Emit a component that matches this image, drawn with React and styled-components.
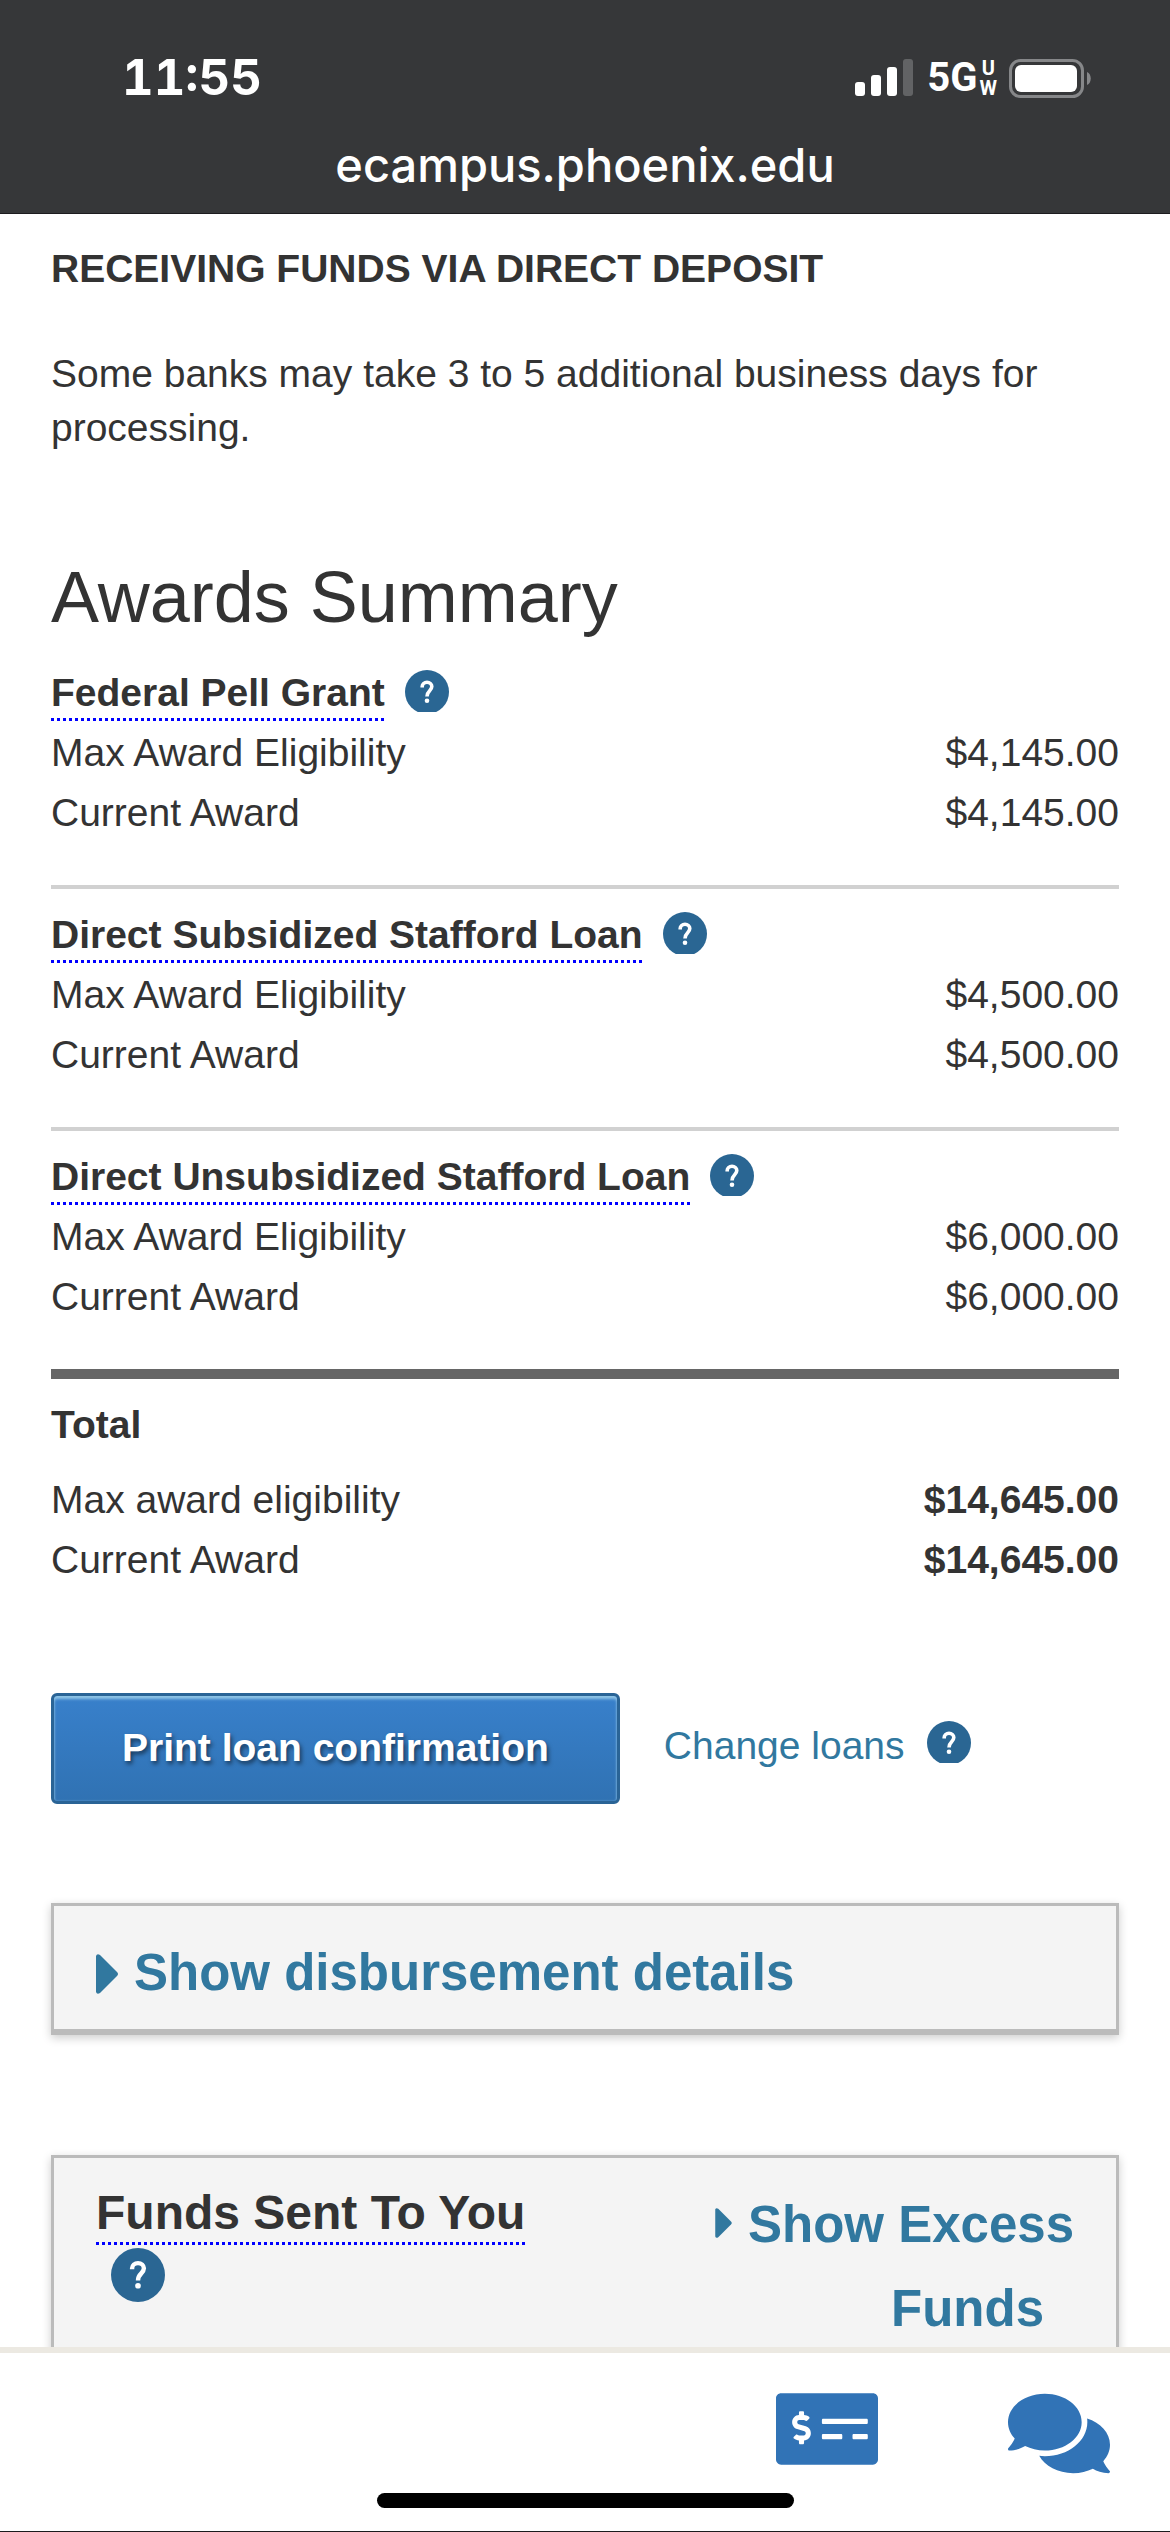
// App.jsx
import styled, { createGlobalStyle } from 'styled-components';
import { FaComments, FaMoneyCheckAlt } from 'react-icons/fa';

const GlobalStyle = createGlobalStyle`
  * {
    box-sizing: border-box;
  }

  body {
    margin: 0;
    background-color: #fff;
    color: #333;
    font-family: "Liberation Sans", Arial, sans-serif;
    font-size: 39px;
    line-height: 54px;
  }
`;

const Screen = styled.div`
  display: flex;
  flex-direction: column;
  height: 100vh;
`;

const BrowserHeader = styled.header`
  flex: none;
  background-color: #363739;
  border-bottom: 1px solid #1c1c1e;
  color: #fff;
  font-family: Inter, sans-serif;
`;

const StatusBar = styled.div`
  display: flex;
  align-items: center;
  justify-content: space-between;
  padding: 48px 79px 0 122px;
`;

const Time = styled.time`
  font-size: 49px;
  font-variant-numeric: tabular-nums;
  font-weight: 700;
  line-height: 60px;
`;

const StatusIcons = styled.div`
  display: flex;
  align-items: center;

  svg {
    display: block;
  }
`;

const Network = styled.span`
  display: flex;
  align-items: center;
  gap: 2px;
  margin: 0 12px 0 14px;
  font-family: Roboto, sans-serif;
  font-size: 40px;
  font-weight: 700;
  line-height: 40px;
`;

const NetworkBand = styled.span`
  display: flex;
  flex-direction: column;
  align-items: center;
  font-size: 20px;
  line-height: 20px;
`;

const Address = styled.div`
  padding: 27px 51px 19px;
  font-size: 47px;
  font-weight: 500;
  line-height: 59px;
  text-align: center;
`;

const Content = styled.main`
  flex: 1;
  min-height: 0;
  overflow-y: auto;
  padding: 28px 51px 0;
  scrollbar-width: none;
`;

const NoticeTitle = styled.h4`
  margin: 0 0 51px;
  font-size: 39px;
`;

const Notice = styled.p`
  margin: 0 0 102px;
`;

const SectionTitle = styled.h2`
  margin: 0 0 10px;
  font-size: 72px;
  font-weight: 400;
  line-height: 80px;
`;

const Award = styled.section`
  padding: 16px 0 42px;
  border-bottom: ${props => (props.$last ? '10px solid #666' : '4px solid #d1d1d1')};
`;

const AwardTitle = styled.h3`
  display: flex;
  align-items: flex-start;
  gap: 20px;
  height: 60px;
  margin: 0;
  font-size: 39px;
  line-height: 60px;

  button {
    margin-top: 7px;
  }
`;

const Term = styled.span`
  height: ${props => (props.$large ? 62 : 58)}px;
  font-size: ${props => (props.$large ? 48 : 39)}px;
  line-height: 60px;
  background: repeating-linear-gradient(to right, #00f 0 3px, transparent 3px 6px) left bottom / 100% 3px no-repeat;
`;

const AwardTable = styled.table`
  width: 100%;
  border-collapse: collapse;
  line-height: 60px;

  th,
  td {
    padding: 0;
    font-weight: 400;
    text-align: left;
  }

  td {
    font-weight: ${props => (props.$strong ? 700 : 400)};
    text-align: right;
  }
`;

const Total = styled.section`
  padding-top: 16px;
`;

const TotalTitle = styled.h3`
  margin: 0 0 15px;
  font-size: 39px;
  line-height: 60px;
`;

const Actions = styled.div`
  display: flex;
  align-items: center;
  gap: 44px;
  margin-top: 103px;
`;

const PrintButton = styled.button`
  padding: 22px 68px 23px;
  border: 3px solid #2a6496;
  border-radius: 6px;
  background: linear-gradient(#3880cb, #3072b3);
  box-shadow: inset 0 3px 3px #8fc4e6, inset 0 0 2px #6fa9da;
  color: #fff;
  font-family: inherit;
  font-size: 39px;
  font-weight: 700;
  line-height: 60px;
  text-shadow: 2px 3px 4px rgba(0, 0, 0, 0.5);
  cursor: pointer;
`;

const ChangeLoans = styled.div`
  display: flex;
  align-items: center;
  gap: 22px;
  padding-bottom: 6px;

  a {
    color: #31789f;
    text-decoration: none;
  }

  button {
    margin-bottom: 8px;
  }
`;

const HelpButton = styled.button`
  display: block;
  flex: none;
  margin: 0;
  padding: 0;
  border: none;
  background: none;
  cursor: pointer;

  svg {
    display: block;
  }
`;

const Panel = styled.section`
  display: flex;
  justify-content: space-between;
  align-items: flex-start;
  margin-top: ${props => props.$gap}px;
  padding: 25px 42px 14px;
  border: 3px solid #bbb;
  border-bottom-width: 6px;
  background-color: #f4f4f4;
  box-shadow: 0 3px 9px rgba(0, 0, 0, 0.2);
`;

const PanelTitle = styled.h3`
  display: flex;
  flex-direction: column;
  align-items: flex-start;
  gap: 3px;
  margin: 0;

  button {
    margin-left: 15px;
  }
`;

const PanelLink = styled.a`
  color: #31789f;
  font-size: 51px;
  font-weight: 700;
  line-height: 84px;
  text-decoration: none;
`;

const PanelSide = styled.div`
  width: 40%;
  text-align: right;

  a {
    padding-right: 30px;
  }
`;

const Caret = styled.svg`
  margin-right: 16px;
  vertical-align: ${props => props.$rise}px;
`;

const BottomBar = styled.footer`
  flex: none;
  border-top: 6px solid #ece9e2;
  border-bottom: 1px solid #1c1c1e;
  background-color: #fff;
`;

const Toolbar = styled.nav`
  display: flex;
  justify-content: flex-end;
  align-items: flex-start;
  gap: 130px;
  padding: 35px 60px 14px 51px;
`;

const ToolButton = styled.button`
  padding: 0;
  border: none;
  background: none;
  color: #3173b6;
  cursor: pointer;

  svg {
    display: block;
    width: 102px;
    height: ${props => props.$height}px;
  }
`;

const HomeIndicator = styled.div`
  width: 417px;
  height: 15px;
  margin: 0 auto 23px;
  border-radius: 8px;
  background-color: #000;
`;

const awards = [
  { name: 'Federal Pell Grant', max: '$4,145.00', current: '$4,145.00' },
  { name: 'Direct Subsidized Stafford Loan', max: '$4,500.00', current: '$4,500.00' },
  { name: 'Direct Unsubsidized Stafford Loan', max: '$6,000.00', current: '$6,000.00' },
];

function Help({ label, large }) {
  return (
    <HelpButton type="button" aria-label={`Help: ${label}`}>
      <svg width={large ? 54 : 44} height={large ? 54 : 42} viewBox={large ? '0 0 44 44' : '0 0 44 42'}>
        <circle cx="22" cy="22" r="22" fill="#2a6693" />
        <path
          d="M17.2 17.4V16.6a4.8 4.3 0 0 1 9.6 0c0 4.2-4.8 4.2-4.8 9.8"
          fill="none"
          stroke="#fff"
          strokeWidth="3.6"
        />
        <circle cx="22" cy="30.8" r="2.3" fill="#fff" />
      </svg>
    </HelpButton>
  );
}

function AwardRows({ maxLabel = 'Max Award Eligibility', max, current, strong }) {
  return (
    <AwardTable $strong={strong}>
      <tbody>
        <tr>
          <th scope="row">{maxLabel}</th>
          <td>{max}</td>
        </tr>
        <tr>
          <th scope="row">Current Award</th>
          <td>{current}</td>
        </tr>
      </tbody>
    </AwardTable>
  );
}

function SignalIcon() {
  return (
    <svg width="58" height="38" viewBox="0 0 58 38" fill="#fff">
      <rect x="0" y="23" width="10" height="14" rx="3" />
      <rect x="16" y="16" width="10" height="21" rx="3" />
      <rect x="32" y="8" width="10" height="29" rx="3" />
      <rect x="48" y="0" width="10" height="37" rx="3" fill="#626365" />
    </svg>
  );
}

function BatteryIcon() {
  return (
    <svg width="82" height="39" viewBox="0 0 82 39">
      <rect x="1.5" y="1.5" width="72" height="36" rx="10" fill="none" stroke="#868789" strokeWidth="3" />
      <rect x="6" y="6" width="62" height="27" rx="6" fill="#fff" />
      <path d="M78 13c5 2 5 11 0 13Z" fill="#868789" />
    </svg>
  );
}

export default function App() {
  return (
    <Screen>
      <GlobalStyle />
      <BrowserHeader>
        <StatusBar>
          <Time>11:55</Time>
          <StatusIcons>
            <SignalIcon />
            <Network>
              5G
              <NetworkBand>
                <span>U</span>
                <span>W</span>
              </NetworkBand>
            </Network>
            <BatteryIcon />
          </StatusIcons>
        </StatusBar>
        <Address>ecampus.phoenix.edu</Address>
      </BrowserHeader>

      <Content>
        <NoticeTitle>RECEIVING FUNDS VIA DIRECT DEPOSIT</NoticeTitle>
        <Notice>Some banks may take 3 to 5 additional business days for processing.</Notice>

        <SectionTitle>Awards Summary</SectionTitle>
        {awards.map((award, index) => (
          <Award key={award.name} $last={index === awards.length - 1}>
            <AwardTitle>
              <Term>{award.name}</Term>
              <Help label={award.name} />
            </AwardTitle>
            <AwardRows max={award.max} current={award.current} />
          </Award>
        ))}
        <Total>
          <TotalTitle>Total</TotalTitle>
          <AwardRows maxLabel="Max award eligibility" max="$14,645.00" current="$14,645.00" strong />
        </Total>

        <Actions>
          <PrintButton type="button">Print loan confirmation</PrintButton>
          <ChangeLoans>
            <a href="#change-loans">Change loans</a>
            <Help label="Change loans" />
          </ChangeLoans>
        </Actions>

        <Panel $gap={99}>
          <PanelLink href="#disbursement">
            <Caret $rise={-4} width="22" height="40" viewBox="0 0 22 40" fill="currentColor">
              <path d="M0 2Q1-1 4 1L21 18Q23 20 21 22L4 39Q1 41 0 38Z" />
            </Caret>
            Show disbursement details
          </PanelLink>
        </Panel>

        <Panel $gap={120}>
          <PanelTitle>
            <Term $large>Funds Sent To You</Term>
            <Help label="Funds Sent To You" large />
          </PanelTitle>
          <PanelSide>
            <PanelLink href="#excess-funds">
              <Caret $rise={4} width="17" height="30" viewBox="0 0 22 40" fill="currentColor">
                <path d="M0 2Q1-1 4 1L21 18Q23 20 21 22L4 39Q1 41 0 38Z" />
              </Caret>
              Show Excess Funds
            </PanelLink>
          </PanelSide>
        </Panel>
      </Content>

      <BottomBar>
        <Toolbar>
          <ToolButton type="button" aria-label="Finances" $height={82}>
            <FaMoneyCheckAlt />
          </ToolButton>
          <ToolButton type="button" aria-label="Messages" $height={91}>
            <FaComments />
          </ToolButton>
        </Toolbar>
        <HomeIndicator />
      </BottomBar>
    </Screen>
  );
}
